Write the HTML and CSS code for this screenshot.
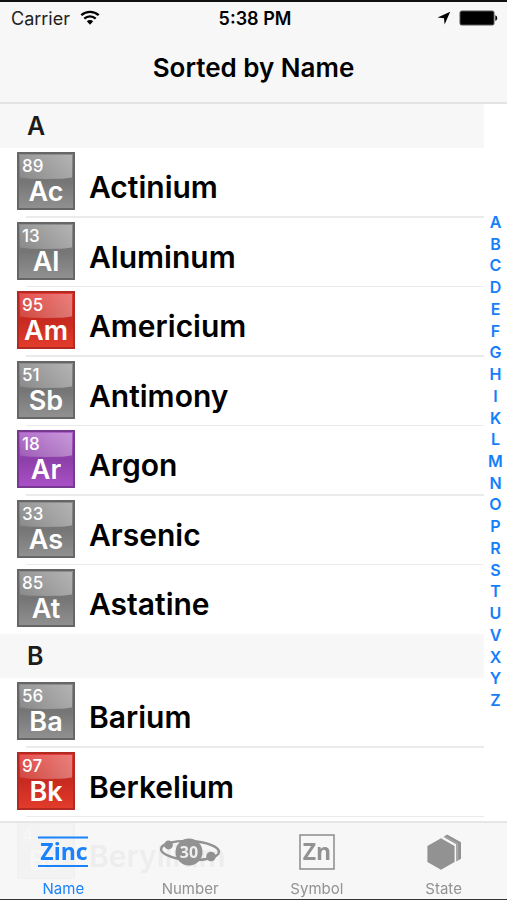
FILE: index.html
```html
<!DOCTYPE html>
<html lang="en">
<head>
    <meta charset="UTF-8">
    <meta name="viewport" content="width=device-width, initial-scale=1">
    <title>Sorted by Name</title>
    <link rel="stylesheet" href="styles.css">
</head>
<body>
    <header class="top">
        <div class="status">
            <div class="carrier">
                <span>Carrier</span>
                <svg width="20" height="16" viewBox="0 0 20 16" aria-hidden="true">
                    <path d="M1.3 5.2C6.2.7 13.8.7 18.7 5.2" fill="none" stroke="#000" stroke-width="2.3"/>
                    <path d="M4.3 8.6c3.3-3 8.1-3 11.4 0" fill="none" stroke="#000" stroke-width="2.3"/>
                    <path d="M6.8 11.3c1.9-1.6 4.5-1.6 6.4 0L10 14.8z"/>
                </svg>
            </div>
            <time class="time">5:38 PM</time>
            <div class="power">
                <svg width="14" height="14" viewBox="0 0 14 14" aria-hidden="true">
                    <path d="M13.2.8 7.6 13.4 7 7.3.6 6.6z"/>
                </svg>
                <svg width="40" height="16" viewBox="0 0 40 16" aria-hidden="true">
                    <rect x=".5" y=".5" width="35" height="15" rx="2.5" fill="#555"/>
                    <rect x="1.5" y="1.5" width="33" height="13" rx="1.5"/>
                    <path d="M36.3 5.2c2.6.8 2.6 4.8 0 5.6z"/>
                </svg>
            </div>
        </div>
        <h1 class="title">Sorted by Name</h1>
    </header>

    <main class="content">
        <div class="list">
            <h2 class="letter" id="a">A</h2>
            <ul class="elements">
                <li><a href="#actinium"><span class="tile gray"><small>89</small><b>Ac</b></span><span class="name">Actinium</span></a></li>
                <li><a href="#aluminum"><span class="tile gray"><small>13</small><b>Al</b></span><span class="name">Aluminum</span></a></li>
                <li><a href="#americium"><span class="tile red"><small>95</small><b>Am</b></span><span class="name">Americium</span></a></li>
                <li><a href="#antimony"><span class="tile gray"><small>51</small><b>Sb</b></span><span class="name">Antimony</span></a></li>
                <li><a href="#argon"><span class="tile purple"><small>18</small><b>Ar</b></span><span class="name">Argon</span></a></li>
                <li><a href="#arsenic"><span class="tile gray"><small>33</small><b>As</b></span><span class="name">Arsenic</span></a></li>
                <li><a href="#astatine"><span class="tile gray"><small>85</small><b>At</b></span><span class="name">Astatine</span></a></li>
            </ul>
            <h2 class="letter" id="b">B</h2>
            <ul class="elements">
                <li><a href="#barium"><span class="tile gray"><small>56</small><b>Ba</b></span><span class="name">Barium</span></a></li>
                <li><a href="#berkelium"><span class="tile red"><small>97</small><b>Bk</b></span><span class="name">Berkelium</span></a></li>
                <li><a href="#beryllium"><span class="tile gray"><small>4</small><b>Be</b></span><span class="name">Beryllium</span></a></li>
            </ul>
        </div>
        <nav class="index" aria-label="Index">
            <a href="#a">A</a>
            <a href="#b">B</a>
            <a href="#c">C</a>
            <a href="#d">D</a>
            <a href="#e">E</a>
            <a href="#f">F</a>
            <a href="#g">G</a>
            <a href="#h">H</a>
            <a href="#i">I</a>
            <a href="#k">K</a>
            <a href="#l">L</a>
            <a href="#m">M</a>
            <a href="#n">N</a>
            <a href="#o">O</a>
            <a href="#p">P</a>
            <a href="#r">R</a>
            <a href="#s">S</a>
            <a href="#t">T</a>
            <a href="#u">U</a>
            <a href="#v">V</a>
            <a href="#x">X</a>
            <a href="#y">Y</a>
            <a href="#z">Z</a>
        </nav>
    </main>

    <nav class="tabs" aria-label="Sort order">
        <a class="tab active" href="#name">
            <svg width="52" height="36" viewBox="0 0 52 36" aria-hidden="true">
                <path d="M1 3.5h50M1 32h50" stroke="currentColor" stroke-width="2"/>
                <text x="27" y="26" class="zinc">Zinc</text>
            </svg>
            <span>Name</span>
        </a>
        <a class="tab" href="#number">
            <svg width="62" height="36" viewBox="0 0 62 36" aria-hidden="true">
                <ellipse cx="31" cy="16.5" rx="29" ry="9.5" fill="none" stroke="currentColor" stroke-width="2.4" transform="rotate(3 31 16.5)"/>
                <circle cx="30" cy="18" r="13.5" fill="currentColor"/>
                <circle cx="9.5" cy="11" r="4.4" fill="currentColor"/>
                <circle cx="52" cy="22.5" r="4.8" fill="currentColor"/>
                <text x="30" y="24" class="thirty">30</text>
            </svg>
            <span>Number</span>
        </a>
        <a class="tab" href="#symbol">
            <svg width="36" height="36" viewBox="0 0 36 36" aria-hidden="true">
                <rect x="1" y="1" width="34" height="34" fill="none" stroke="currentColor" stroke-width="1.6"/>
                <text x="18" y="26" class="zn">Zn</text>
            </svg>
            <span>Symbol</span>
        </a>
        <a class="tab" href="#state">
            <svg width="36" height="36" viewBox="0 0 36 36" aria-hidden="true">
                <path d="M15 4.3 28.6 12v16L15 35.8 1.4 28V12z" fill="currentColor"/>
                <path d="M17.5 3 21 .6 35 8.3v16.4l-4.8 2.8V10.2z" fill="currentColor"/>
                <path d="M18.5 2.4 31.6 9.6v16.8" fill="none" stroke="#b5b5b5" stroke-width=".8"/>
            </svg>
            <span>State</span>
        </a>
    </nav>
</body>
</html>
```
FILE: styles.css
```css
* {
    box-sizing: border-box;
}

body {
    display: flex;
    flex-direction: column;
    height: 100vh;
    margin: 0;
    background: #fff;
    color: #000;
    font-family: Inter, "Liberation Sans", sans-serif;
    overflow: hidden;
}

a {
    color: inherit;
    text-decoration: none;
}

.top {
    flex: none;
    background: #f7f7f7;
    border-top: 2px solid #111;
    border-bottom: 2px solid #e3e3e3;
}

.status {
    display: grid;
    grid-template-columns: 1fr auto 1fr;
    align-items: center;
    height: 32px;
    padding: 0 8px 0 11px;
    font-size: 18px;
}

.carrier {
    display: flex;
    align-items: center;
    gap: 10px;
    color: #222;
}

.time {
    font-weight: 600;
}

.power {
    display: flex;
    align-items: center;
    justify-content: flex-end;
    gap: 8px;
}

.title {
    margin: 0;
    height: 68px;
    line-height: 68px;
    text-align: center;
    font-size: 26px;
    font-weight: 600;
}

.content {
    flex: 1;
    display: flex;
    min-height: 0;
}

.list {
    flex: 1;
    overflow: hidden;
}

.letter {
    margin: 0;
    height: 44px;
    padding-left: 27px;
    background: #f7f7f7;
    color: #1c1c1c;
    font-size: 25px;
    font-weight: 600;
    line-height: 45px;
}

.elements {
    margin: 0;
    padding: 0;
    list-style: none;
}

.elements li {
    height: 69px;
    background: linear-gradient(#ebebeb, #ebebeb) no-repeat 26px 100% / 100% 1px;
}

.elements li:nth-child(odd) {
    height: 70px;
    background-size: 100% 2px;
}

.elements li:last-child {
    height: 69px;
    background: none;
}

.elements a {
    display: flex;
    gap: 14px;
    padding: 4px 0 0 17px;
}

.name {
    padding-top: 5px;
    font-size: 30px;
    font-weight: 600;
    line-height: 60px;
}

.tile {
    position: relative;
    display: flex;
    flex-direction: column;
    width: 58px;
    height: 58px;
    border: 2px solid;
    color: #fff;
}

.tile::before {
    content: '';
    position: absolute;
    top: 1px;
    left: 1px;
    right: 1px;
    height: 24px;
    border-radius: 0 0 50% 50% / 0 0 2px 2px;
    background: linear-gradient(100deg, rgba(255, 255, 255, 0.12), rgba(255, 255, 255, 0.36));
}

.tile small {
    position: relative;
    padding-left: 3px;
    font-size: 17px;
    font-weight: 500;
    line-height: 24px;
}

.tile b {
    position: relative;
    font-size: 27px;
    font-weight: 600;
    line-height: 28px;
    text-align: center;
}

.gray {
    border-color: #666;
    background: linear-gradient(#8c8c8c, #757575 50%, #909090);
}

.red {
    border-color: #b32a22;
    background: linear-gradient(#e23c39, #c72a20 50%, #e23b2b);
}

.purple {
    border-color: #76398f;
    background: linear-gradient(#ab62c6, #8c3fa8 50%, #a950c6);
}

.index {
    display: grid;
    grid-auto-rows: 1fr;
    align-self: flex-start;
    align-items: center;
    width: 23px;
    height: 500px;
    margin-top: 107px;
    color: #147efb;
    font-size: 16px;
    font-weight: 600;
    line-height: 20px;
    text-align: center;
}

/* translucent bar over the end of the list */
.tabs {
    position: fixed;
    left: 0;
    right: 0;
    bottom: 0;
    display: grid;
    grid-template-columns: repeat(4, 1fr);
    height: 79px;
    border-top: 2px solid #e6e6e6;
    border-bottom: 1px solid #333;
    background: rgba(247, 247, 247, 0.96);
    background-clip: padding-box;
}

.tab {
    display: flex;
    flex-direction: column;
    align-items: center;
    gap: 9px;
    padding-top: 11px;
    color: #929292;
    font-size: 15px;
    line-height: 20px;
}

.tab.active {
    color: #1a82fb;
}

.tab text {
    fill: currentColor;
    font-family: "Open Sans", sans-serif;
    font-size: 23px;
    font-weight: 700;
    text-anchor: middle;
}

.tab .thirty {
    fill: #eee;
    font-size: 16px;
}
```
